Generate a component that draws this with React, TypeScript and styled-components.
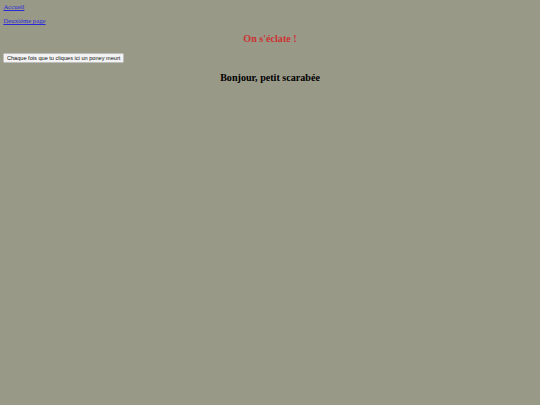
import styled, { createGlobalStyle } from "styled-components";

const GlobalStyle = createGlobalStyle`
  html, body {
    margin: 0;
    padding: 0;
    background: #999988;
  }
  body {
    font-family: "Liberation Serif", "Times New Roman", serif;
    font-size: 6.75px;
    min-height: 405px;
  }
`;

const Page = styled.div`
  padding: 3px 3.4px;
`;

const Nav = styled.nav`
  display: flex;
  flex-direction: column;
  align-items: flex-start;
  gap: 6.75px;
  line-height: 7.6px;
`;

const NavLink = styled.a`
  color: #2a2ad8;
  text-decoration: underline;
`;

const Main = styled.main`
  display: flex;
  flex-direction: column;
  gap: 8.4px;
  margin-top: 7.6px;
`;

const Title = styled.h2<{ $color?: string }>`
  margin: 0;
  font-size: 10.1px;
  line-height: 11.6px;
  font-weight: bold;
  text-align: center;
  color: ${(p) => p.$color ?? "#000"};
`;

const PonyButton = styled.button`
  align-self: flex-start;
  font-family: "Liberation Sans", Arial, sans-serif;
  font-size: 5.62px;
  line-height: 6.5px;
  padding: 1.2px 2.5px;
  background: #f2f2f2;
  color: #111;
  border: 0.5px solid #bdbdbd;
  border-radius: 1.5px;
`;

export default function App() {
  return (
    <>
      <GlobalStyle />
      <Page>
        <Nav>
          <NavLink href="#">Accueil</NavLink>
          <NavLink href="#">Deuxième page</NavLink>
        </Nav>
        <Main>
          <Title $color="#cc3333">On s'éclate !</Title>
          <PonyButton>Chaque fois que tu cliques ici un poney meurt</PonyButton>
          <Title>Bonjour, petit scarabée</Title>
        </Main>
      </Page>
    </>
  );
}
